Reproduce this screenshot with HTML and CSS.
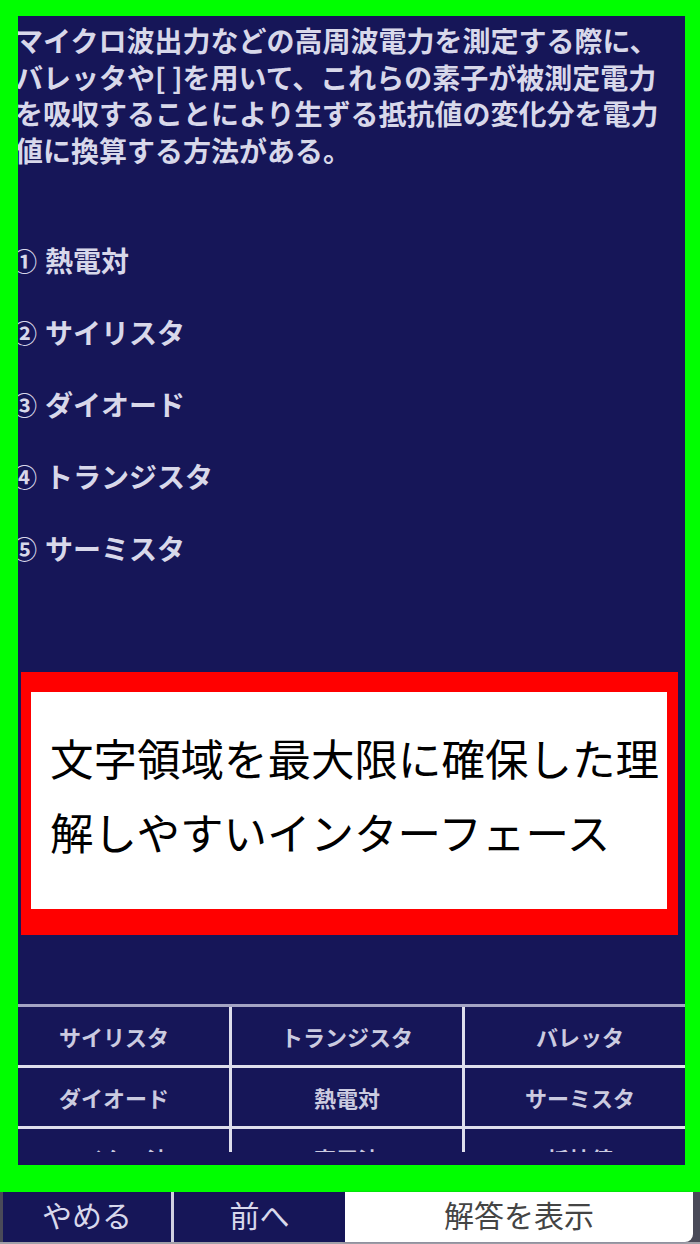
FILE: index.html
```html
<!DOCTYPE html>
<html lang="ja">
<head>
<meta charset="utf-8">
<title>問題</title>
<link rel="stylesheet" href="styles.css">
</head>
<body>
<div class="frame">
  <div class="panel">
    <p class="question">マイクロ波出力などの高周波電力を測定する際に、<br>バレッタや[ ]を用いて、これらの素子が被測定電力<br>を吸収することにより生ずる抵抗値の変化分を電力<br>値に換算する方法がある。</p>
    <ul class="options">
      <li class="option"><span class="num">①</span>熱電対</li>
      <li class="option"><span class="num">②</span>サイリスタ</li>
      <li class="option"><span class="num">③</span>ダイオード</li>
      <li class="option"><span class="num">④</span>トランジスタ</li>
      <li class="option"><span class="num">⑤</span>サーミスタ</li>
    </ul>
    <div class="choices">
      <div class="grid">
        <div class="cell">サイリスタ</div>
        <div class="cell">トランジスタ</div>
        <div class="cell">バレッタ</div>
        <div class="cell">ダイオード</div>
        <div class="cell">熱電対</div>
        <div class="cell">サーミスタ</div>
        <div class="cell">マイクロ波</div>
        <div class="cell">高周波</div>
        <div class="cell">抵抗値</div>
      </div>
    </div>
  </div>
</div>
<div class="bar">
  <div class="btn btn-quit">やめる</div>
  <div class="btn btn-prev">前へ</div>
  <div class="btn btn-answer">解答を表示</div>
</div>
<div class="callout">
  <p class="callout-text">文字領域を最大限に確保した理<br>解しやすいインターフェース</p>
</div>
</body>
</html>
```

FILE: styles.css
```css
html, body {
  margin: 0;
  padding: 0;
}

body {
  width: 700px;
  height: 1244px;
  background: #00ff00;
  position: relative;
  overflow: hidden;
  font-family: "Noto Sans CJK JP", "Noto Sans", sans-serif;
}

.frame {
  padding: 16px 15px 27px 18px;
}

.panel {
  height: 1149px;
  background: #161658;
  overflow: hidden;
  display: flex;
  flex-direction: column;
  padding-bottom: 13px;
  box-sizing: border-box;
  color: #d8d8ea;
}

.question {
  margin: 6px 0 0 -3px;
  font-size: 28px;
  line-height: 36.5px;
  font-weight: 700;
  white-space: nowrap;
}

.options {
  list-style: none;
  margin: 56px 0 0 -6px;
  padding: 0;
}

.option {
  font-size: 28px;
  line-height: 72px;
  height: 72px;
  font-weight: 700;
  white-space: nowrap;
  display: flex;
  align-items: center;
}

.num {
  font-size: 25px;
  margin-right: 8px;
  font-weight: 700;
}

.choices {
  margin-top: auto;
  height: 148px;
  overflow: hidden;
  border-top: 3px solid #a4a4c4;
  box-sizing: border-box;
  margin-left: -19px;
  width: 696px;
}

.grid {
  display: grid;
  grid-template-columns: 230px 230px 230px;
  grid-auto-rows: 58px;
  gap: 3px;
  background: #dedeec;
}

.cell {
  background: #161658;
  display: flex;
  align-items: center;
  justify-content: center;
  font-size: 22px;
  font-weight: 700;
  color: #cbcbe0;
}

.bar {
  height: 50px;
  display: flex;
  padding: 0 7px 0 3px;
  background: #4a4a58;
  border-bottom: 2px solid #a0a0a8;
}

.btn {
  display: flex;
  align-items: center;
  justify-content: center;
  font-size: 30px;
  padding-bottom: 6px;
  box-sizing: border-box;
}

.btn-quit {
  width: 171px;
  background: #161658;
  color: #d8d8ec;
  border-right: 3px solid #d0d0e0;
}

.btn-prev {
  width: 171px;
  background: #161658;
  color: #d8d8ec;
}

.btn-answer {
  flex: 1;
  background: #ffffff;
  color: #444444;
  border-bottom-right-radius: 8px;
  box-shadow: -2px 0 2px rgba(22, 22, 88, 0.4);
}

.callout {
  position: absolute;
  left: 21px;
  top: 672px;
  width: 657px;
  height: 263px;
  box-sizing: border-box;
  border-style: solid;
  border-color: #ff0000;
  border-width: 20px 11px 26px 10px;
  background: #ffffff;
}

.callout-text {
  margin: 0;
  padding: 29px 0 0 19px;
  font-size: 43.5px;
  line-height: 74px;
  color: #000000;
  white-space: nowrap;
}
```
